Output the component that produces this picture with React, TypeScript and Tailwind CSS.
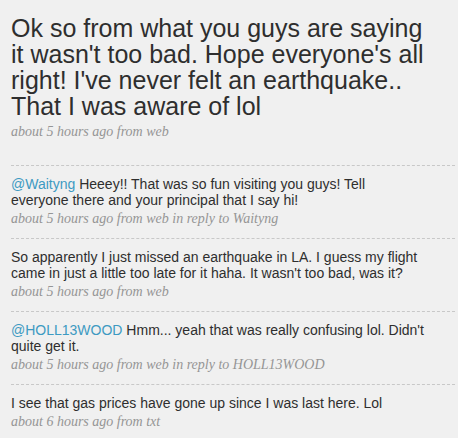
const tweets = [
  {
    mention: 'Waityng',
    text: ' Heeey!! That was so fun visiting you guys! Tell everyone there and your principal that I say hi!',
    meta: 'about 5 hours ago from web',
    reply: 'Waityng',
  },
  {
    text: "So apparently I just missed an earthquake in LA. I guess my flight came in just a little too late for it haha. It wasn't too bad, was it?",
    meta: 'about 5 hours ago from web',
  },
  {
    mention: 'HOLL13WOOD',
    text: " Hmm... yeah that was really confusing lol. Didn't quite get it.",
    meta: 'about 5 hours ago from web',
    reply: 'HOLL13WOOD',
  },
  {
    text: 'I see that gas prices have gone up since I was last here. Lol',
    meta: 'about 6 hours ago from txt',
  },
]

const sans = { fontFamily: '"Liberation Sans", Arial, sans-serif' }
const serif = { fontFamily: 'Georgia, "Liberation Serif", serif' }

function Meta({ children, className = 'mt-0.5' }: { children: React.ReactNode; className?: string }) {
  return (
    <div className={`${className} text-[14px] italic leading-[18px] text-[#959595]`} style={serif}>
      {children}
    </div>
  )
}

export default function App() {
  return (
    <div className="h-[438px] w-[458px] overflow-hidden bg-[#f0f0f0] pl-[11px] pr-[3px]" style={sans}>
      {/* latest status */}
      <div className="border-b border-dashed border-[#c8c8c8] pt-[15px] pb-[24px]">
        <p className="w-[422px] text-[25px] leading-[26px] text-[#2e2e2e]">
          Ok so from what you guys are saying it wasn't too bad. Hope everyone's all right! I've never felt an
          earthquake.. That I was aware of lol
        </p>
        <Meta className="mt-1">about 5 hours ago from web</Meta>
      </div>

      {tweets.map((t, i) => (
        <div
          key={i}
          className={
            i < tweets.length - 1
              ? 'border-b border-dashed border-[#c8c8c8] py-[10px]'
              : 'py-[10px]'
          }
        >
          <p className="w-[415px] text-[14px] leading-4 text-[#2e2e2e]">
            {t.mention && <span className="text-[#3d9ac2]">@{t.mention}</span>}
            {t.text}
          </p>
          <Meta>
            {t.meta}
            {t.reply && ` in reply to ${t.reply}`}
          </Meta>
        </div>
      ))}
    </div>
  )
}
